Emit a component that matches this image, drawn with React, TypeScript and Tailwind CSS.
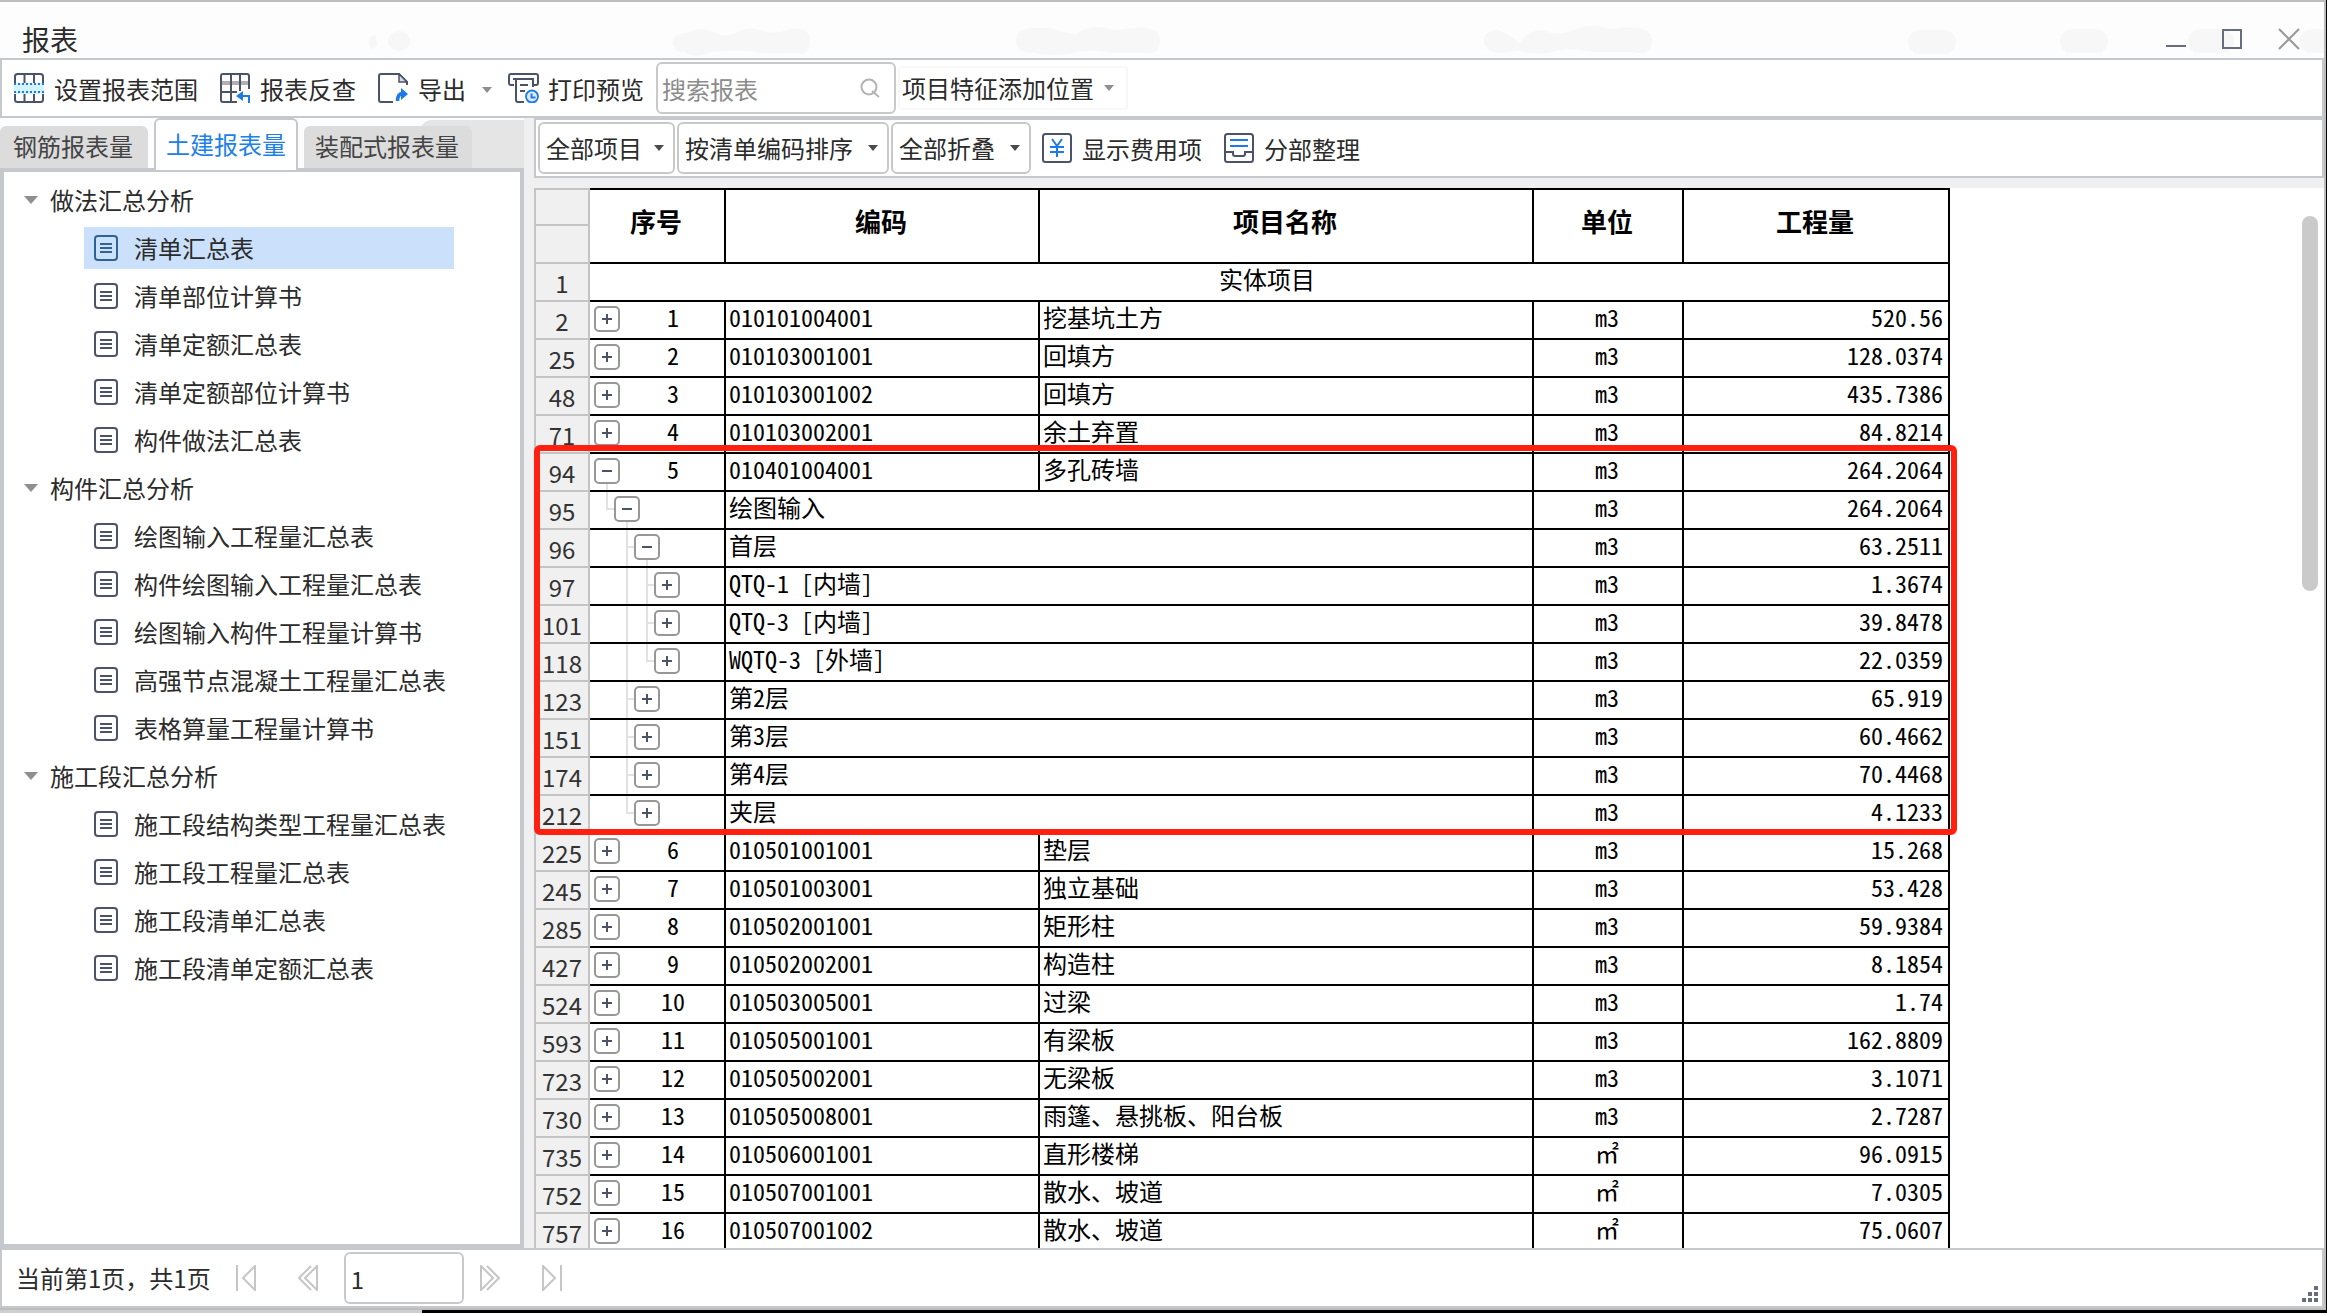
import type { ReactNode } from "react";

const LINE = "#4b5366";
const BLUE = "#1f7ae8";

/* ---------- icons ---------- */

function RangeIcon() {
  return (
    <svg width="30" height="30" viewBox="0 0 30 30" fill="none" aria-hidden="true">
      <rect x="1" y="1" width="28" height="28" rx="2.5" stroke={LINE} strokeWidth="2" />
      <path d="M10.5 1v9M20 1v9M10.5 21v8M20 21v8" stroke={LINE} strokeWidth="2" />
      <rect x="0" y="10" width="30" height="11" fill="#d3f4ff" />
      <path d="M0 11h30M0 19h30" stroke={BLUE} strokeWidth="2" strokeDasharray="2 2" />
    </svg>
  );
}

function LookupIcon() {
  return (
    <svg width="30" height="30" viewBox="0 0 30 30" fill="none" aria-hidden="true">
      <rect x="2" y="8" width="26" height="4" fill="#b0b0b0" />
      <path d="M17 29H3a2 2 0 0 1-2-2V3a2 2 0 0 1 2-2h24a2 2 0 0 1 2 2v13" stroke={LINE} strokeWidth="2" />
      <path d="M11 1v28M20 1v17M1 19h16" stroke={LINE} strokeWidth="2" />
      <path d="M20 23h9v7" stroke={BLUE} strokeWidth="2" />
      <path d="M16 23l7-5v10z" fill={BLUE} />
    </svg>
  );
}

function ExportIcon() {
  return (
    <svg width="30" height="30" viewBox="0 0 30 30" fill="none" aria-hidden="true">
      <path d="M15 29H3a2 2 0 0 1-2-2V3a2 2 0 0 1 2-2h18l8 8v3" stroke={LINE} strokeWidth="2" />
      <path d="M21 1v8h8z" stroke={LINE} strokeWidth="1.5" fill="#d5d8de" />
      <path d="M19.5 28c0-5 2-7.500 5.500-7.500" stroke={BLUE} strokeWidth="3.5" />
      <path d="M23 15l7 6-7 6z" fill={BLUE} />
    </svg>
  );
}

function PreviewIcon() {
  return (
    <svg className="-mr-0.5" width="32" height="30" viewBox="0 0 32 30" fill="none" aria-hidden="true">
      <path d="M6 12H3a2 2 0 0 1-2-2V3a2 2 0 0 1 2-2h25a2 2 0 0 1 2 2v7a2 2 0 0 1-2 2h-3" stroke={LINE} strokeWidth="2" />
      <path d="M5 6h21M8 6v21a2 2 0 0 0 2 2h6M25 6v8M12 12h8M12 18h5" stroke={LINE} strokeWidth="2" />
      <circle cx="24" cy="23.5" r="6" fill="#dcebff" stroke={BLUE} strokeWidth="1.8" />
      <path d="M23.5 20.5v4h4" stroke={BLUE} strokeWidth="2" />
    </svg>
  );
}

function FeeIcon() {
  return (
    <svg width="30" height="30" viewBox="0 0 30 30" fill="none" aria-hidden="true">
      <rect x="1" y="1" width="28" height="28" rx="2.5" stroke={LINE} strokeWidth="2" />
      <path d="M10 6l5 7 5-7M15 13v11M8 14h14M8 19h14" stroke={BLUE} strokeWidth="2" />
    </svg>
  );
}

function SectionIcon() {
  return (
    <svg width="30" height="30" viewBox="0 0 30 30" fill="none" aria-hidden="true">
      <rect x="1" y="1" width="28" height="28" rx="2.5" stroke={LINE} strokeWidth="2" />
      <path d="M6 7h18M6 13h18" stroke={BLUE} strokeWidth="2" />
      <path d="M1 19h8v2q0 2 2 2h8q2 0 2-2v-2h8" stroke={LINE} strokeWidth="2" />
    </svg>
  );
}

function DocIcon({ active }: { active?: boolean }) {
  const color = active ? "#2f6490" : LINE;
  return (
    <svg width="24" height="26" viewBox="0 0 24 26" fill="none" aria-hidden="true">
      <rect x="1" y="1" width="22" height="24" rx="3" stroke={color} strokeWidth="2" />
      <path d="M6 9h12M6 13h12M6 17h12" stroke={color} strokeWidth="2" />
    </svg>
  );
}

function Caret({ color = "#8f8f8f", wide }: { color?: string; wide?: boolean }) {
  return wide ? (
    <svg width="14" height="8" viewBox="0 0 14 8" aria-hidden="true">
      <path d="M0 0h14L7 8z" fill={color} />
    </svg>
  ) : (
    <svg width="10" height="6" viewBox="0 0 10 6" aria-hidden="true">
      <path d="M0 0h10L5 6z" fill={color} />
    </svg>
  );
}

/* ---------- data ---------- */

const tree = [
  {
    title: "做法汇总分析",
    items: ["清单汇总表", "清单部位计算书", "清单定额汇总表", "清单定额部位计算书", "构件做法汇总表"],
  },
  {
    title: "构件汇总分析",
    items: [
      "绘图输入工程量汇总表",
      "构件绘图输入工程量汇总表",
      "绘图输入构件工程量计算书",
      "高强节点混凝土工程量汇总表",
      "表格算量工程量计算书",
    ],
  },
  {
    title: "施工段汇总分析",
    items: ["施工段结构类型工程量汇总表", "施工段工程量汇总表", "施工段清单汇总表", "施工段清单定额汇总表"],
  },
];

type Row = {
  no: number;
  level: number;
  open?: boolean;
  seq?: number;
  code: string;
  name?: string;
  unit?: string;
  qty: string;
  /* x positions of guide lines running the full height of the row */
  through?: number[];
  /* guide line that branches to this row's button; "end" stops at the branch */
  branch?: "mid" | "end";
};

const rows: Row[] = [
  { no: 2, level: 0, seq: 1, code: "010101004001", name: "挖基坑土方", qty: "520.56" },
  { no: 25, level: 0, seq: 2, code: "010103001001", name: "回填方", qty: "128.0374" },
  { no: 48, level: 0, seq: 3, code: "010103001002", name: "回填方", qty: "435.7386" },
  { no: 71, level: 0, seq: 4, code: "010103002001", name: "余土弃置", qty: "84.8214" },
  { no: 94, level: 0, open: true, seq: 5, code: "010401004001", name: "多孔砖墙", qty: "264.2064" },
  { no: 95, level: 1, open: true, code: "绘图输入", qty: "264.2064", branch: "end" },
  { no: 96, level: 2, open: true, code: "首层", qty: "63.2511", branch: "mid" },
  { no: 97, level: 3, code: "QTQ-1 [内墙]", qty: "1.3674", branch: "mid", through: [36] },
  { no: 101, level: 3, code: "QTQ-3 [内墙]", qty: "39.8478", branch: "mid", through: [36] },
  { no: 118, level: 3, code: "WQTQ-3 [外墙]", qty: "22.0359", branch: "end", through: [36] },
  { no: 123, level: 2, code: "第2层", qty: "65.919", branch: "mid" },
  { no: 151, level: 2, code: "第3层", qty: "60.4662", branch: "mid" },
  { no: 174, level: 2, code: "第4层", qty: "70.4468", branch: "mid" },
  { no: 212, level: 2, code: "夹层", qty: "4.1233", branch: "end" },
  { no: 225, level: 0, seq: 6, code: "010501001001", name: "垫层", qty: "15.268" },
  { no: 245, level: 0, seq: 7, code: "010501003001", name: "独立基础", qty: "53.428" },
  { no: 285, level: 0, seq: 8, code: "010502001001", name: "矩形柱", qty: "59.9384" },
  { no: 427, level: 0, seq: 9, code: "010502002001", name: "构造柱", qty: "8.1854" },
  { no: 524, level: 0, seq: 10, code: "010503005001", name: "过梁", qty: "1.74" },
  { no: 593, level: 0, seq: 11, code: "010505001001", name: "有梁板", qty: "162.8809" },
  { no: 723, level: 0, seq: 12, code: "010505002001", name: "无梁板", qty: "3.1071" },
  { no: 730, level: 0, seq: 13, code: "010505008001", name: "雨篷、悬挑板、阳台板", qty: "2.7287" },
  { no: 735, level: 0, seq: 14, code: "010506001001", name: "直形楼梯", unit: "㎡", qty: "96.0915" },
  { no: 752, level: 0, seq: 15, code: "010507001001", name: "散水、坡道", unit: "㎡", qty: "7.0305" },
  { no: 757, level: 0, seq: 16, code: "010507001002", name: "散水、坡道", unit: "㎡", qty: "75.0607" },
];

/* ---------- pieces ---------- */

function ToolButton({ icon, children }: { icon: ReactNode; children: ReactNode }) {
  return (
    <button type="button" className="flex items-center gap-[10px] leading-8">
      {icon}
      <span className="pt-0.5">{children}</span>
    </button>
  );
}

function DropDown({ label, value, width }: { label: string; value: string; width: string }) {
  return (
    <div className={`relative flex items-center ${width}`}>
      <select
        aria-label={label}
        defaultValue={value}
        className="h-[52px] w-full appearance-none rounded-md border-2 border-[#c9c9c9] bg-white pl-1.5 leading-8 outline-none"
      >
        <option>{value}</option>
      </select>
      <span className="pointer-events-none absolute right-[11px]">
        <Caret color="#4a4a4a" />
      </span>
    </div>
  );
}

function Guides({ row }: { row: Row }) {
  const indent = row.level * 20;
  return (
    <svg className="absolute inset-0" width="134" height="36" fill="none" stroke="#e2e2e2" strokeWidth="2" aria-hidden="true">
      {row.through?.map((x) => <path key={x} d={`M${x + 1} 0v36`} />)}
      {row.branch && <path d={`M${indent - 3} 0v${row.branch === "end" ? 18 : 36}`} />}
      {row.branch && <path d={`M${indent - 3} 17h8`} />}
      {row.open && <path d={`M${indent + 17} 30v6`} />}
    </svg>
  );
}

const indents = ["ml-1", "ml-6", "ml-11", "ml-16"];

function Expander({ row }: { row: Row }) {
  return (
    <button
      type="button"
      aria-label={row.open ? "折叠" : "展开"}
      aria-expanded={!!row.open}
      className={`relative mb-0.5 grid h-[26px] w-[26px] shrink-0 place-items-center rounded-[5px] border-2 border-[#979797] bg-white ${indents[row.level]}`}
    >
      <svg width="10" height="10" viewBox="0 0 10 10" stroke={LINE} strokeWidth="2" aria-hidden="true">
        <path d="M0 5h10" />
        {!row.open && <path d="M5 0v10" />}
      </svg>
    </button>
  );
}

const rowNo = "border-b-2 border-x-2 border-[#c4c4c4] bg-[#f0f0f0] p-0 pt-px text-center font-normal leading-8 text-[#333]";
const cell = "border-b-2 border-r-2 border-black p-0 leading-7";
const headCell = "border-y-2 border-r-2 border-black p-0 pb-2.5 pr-0.5 text-center text-[26px] font-bold leading-8";

function ReportTable() {
  return (
    <table className="w-[1416px] table-fixed border-separate border-spacing-0 text-black">
      <colgroup>
        <col className="w-[56px]" />
        <col className="w-[136px]" />
        <col className="w-[314px]" />
        <col className="w-[494px]" />
        <col className="w-[150px]" />
        <col className="w-[266px]" />
      </colgroup>
      <thead>
        <tr className="h-[38px]">
          <td className={`${rowNo} border-t-2`} />
          {["序号", "编码", "项目名称", "单位", "工程量"].map((t) => (
            <th key={t} rowSpan={2} scope="col" className={headCell}>
              {t}
            </th>
          ))}
        </tr>
        <tr className="h-[38px]">
          <td className={rowNo} />
        </tr>
      </thead>
      <tbody className="[font-feature-settings:'hwid']">
        <tr className="h-[38px]">
          <th scope="row" className={`${rowNo} [font-feature-settings:normal]`}>1</th>
          <td colSpan={5} className={`${cell} pb-[7px] pr-1 text-center`}>
            实体项目
          </td>
        </tr>
        {rows.map((r) => (
          <tr key={r.no} className="h-[38px]">
            <th scope="row" className={`${rowNo} [font-feature-settings:normal]`}>{r.no}</th>
            <td className={`${cell} relative`}>
              <Guides row={r} />
              <div className="flex h-9 items-center">
                <Expander row={r} />
                {r.seq && <span className="mb-[7px] flex-1 pl-0.5 text-center">{r.seq}</span>}
              </div>
            </td>
            <td colSpan={r.name ? 1 : 2} className={`${cell} pb-[7px] pl-[3px]`}>
              {r.code}
            </td>
            {r.name && <td className={`${cell} pb-[7px] pl-[3px]`}>{r.name}</td>}
            <td className={`${cell} pb-[7px] pr-0.5 text-center`}>{r.unit ?? "m3"}</td>
            <td className={`${cell} pb-[7px] pr-[5px] text-right`}>{r.qty}</td>
          </tr>
        ))}
      </tbody>
    </table>
  );
}

function Sidebar() {
  return (
    <aside className="flex w-[524px] shrink-0 flex-col">
      <div role="tablist" className="flex h-[50px] shrink-0 items-end bg-[#fdfdfd] leading-8 text-[#444]">
        <button type="button" role="tab" className="h-[42px] w-[148px] rounded-t-md bg-[#dcdcdc] pb-0.5 pr-0.5">
          钢筋报表量
        </button>
        <button
          type="button"
          role="tab"
          aria-selected="true"
          className="relative z-10 -mb-0.5 ml-[6px] h-[52px] w-[144px] rounded-t-md border-2 border-b-0 border-[#c5c8cd] bg-white pb-0.5 text-[#2080e8]"
        >
          土建报表量
        </button>
        <button type="button" role="tab" className="relative z-10 ml-[6px] h-[42px] w-[168px] rounded-t-md bg-[#dcdcdc] pb-0.5 pr-0.5">
          装配式报表量
        </button>
        <div className="-ml-[52px] h-12 flex-1 rounded-tl-xl bg-[#e5e5e5]" />
      </div>
      <nav className="min-h-0 flex-1 overflow-hidden border-4 border-[#c5c8cd] bg-white pt-1 leading-8">
        {tree.map((g, gi) => (
          <section key={g.title}>
            <button type="button" className="flex h-12 items-center pl-5">
              <Caret wide />
              <span className="ml-3">{g.title}</span>
            </button>
            <ul>
              {g.items.map((t, i) => {
                const active = gi === 0 && i === 0;
                return (
                  <li key={t} className="py-[3px] pl-20 pr-[66px]">
                    <a
                      href="#report"
                      className={`flex h-[42px] items-center whitespace-nowrap pl-[10px] ${active ? "bg-[#cbe1fb]" : ""}`}
                    >
                      <DocIcon active={active} />
                      <span className="ml-4">{t}</span>
                    </a>
                  </li>
                );
              })}
            </ul>
          </section>
        ))}
      </nav>
    </aside>
  );
}

function TitleSmudges() {
  return (
    <svg className="absolute inset-0 h-full w-full" fill="#f7f7f7" aria-hidden="true">
      <ellipse cx="373" cy="40" rx="4" ry="7" />
      <ellipse cx="399" cy="39" rx="11" ry="10" />
      <path d="M673 40q0-8 14-9 14-8 30 1 14 3 22-3 12-5 27 1 12 2 24-3 20-3 20 12t-14 12q-30 2-45-2-24-2-42 2-14 6-24-1-12 0-12-10z" />
      <path d="M1016 38q0-12 16-12h20q14 6 24 6 12-8 26-7 12 4 24 2 34-5 34 11t-16 13h-32q-20-5-40 0-20 4-38 0-18 0-18-13z" />
      <path d="M1484 40q0-12 14-12 16 6 22 14 8-16 26-13 14 6 30-2 16-6 34 0 42-6 42 11t-20 12h-40q-24-6-44 1-18 2-30-3-32 8-34-8z" />
      <rect x="1908" y="28" width="48" height="24" rx="12" />
      <rect x="2060" y="27" width="48" height="24" rx="12" />
      <rect x="2188" y="27" width="46" height="24" rx="12" />
      <rect x="2300" y="27" width="40" height="24" rx="12" />
    </svg>
  );
}

function TitleBar() {
  return (
    <header className="relative flex h-14 shrink-0 items-center justify-between bg-[#fdfdfd] pl-[22px] pr-6 pt-[18px]">
      <TitleSmudges />
      <h1 className="relative text-[28px] leading-8">报表</h1>
      <div className="relative flex items-center gap-9">
        <button type="button" aria-label="最小化">
          <svg width="20" height="22" viewBox="0 0 20 22" stroke="#666d7c" strokeWidth="2">
            <path d="M0 18h20" />
          </svg>
        </button>
        <button type="button" aria-label="最大化">
          <svg width="20" height="20" viewBox="0 0 20 20" fill="none" stroke="#666d7c" strokeWidth="2">
            <rect x="1" y="1" width="18" height="18" />
          </svg>
        </button>
        <button type="button" aria-label="关闭">
          <svg width="22" height="22" viewBox="0 0 22 22" stroke="#999" strokeWidth="2">
            <path d="M1 1l20 20M21 1L1 21" />
          </svg>
        </button>
      </div>
    </header>
  );
}

function MainToolbar() {
  return (
    <div className="relative flex h-[60px] shrink-0 items-center border-2 border-[#c5c8cd] bg-white pl-3">
      <ToolButton icon={<RangeIcon />}>设置报表范围</ToolButton>
      <div className="ml-[22px]">
        <ToolButton icon={<LookupIcon />}>报表反查</ToolButton>
      </div>
      <div className="ml-[22px]">
        <ToolButton icon={<ExportIcon />}>导出</ToolButton>
      </div>
      <button type="button" aria-label="导出选项" className="mx-4 pt-1">
        <Caret />
      </button>
      <ToolButton icon={<PreviewIcon />}>打印预览</ToolButton>
      <label className="relative ml-3 flex items-center">
        <input
          type="text"
          aria-label="搜索报表"
          placeholder="搜索报表"
          className="h-[52px] w-[240px] rounded-md border-2 border-[#c9c9c9] bg-white pl-1 leading-8 outline-none placeholder:text-[#8c8c8c]"
        />
        <svg className="absolute right-4" width="20" height="20" viewBox="0 0 20 20" fill="none" stroke="#b3b3b3" strokeWidth="2" aria-hidden="true">
          <circle cx="9" cy="9" r="7.5" />
          <path d="M12 13l7 6" />
        </svg>
      </label>
      <button type="button" className="ml-0.5 flex h-[44px] items-center gap-[10px] rounded border-2 border-[#f8f8f8] pl-0.5 pr-3 leading-8">
        项目特征添加位置
        <Caret />
      </button>
    </div>
  );
}

const pagerStroke = "#c6c6c6";

function Footer() {
  return (
    <footer className="flex h-[60px] shrink-0 items-center border-2 border-[#c5c8cd] bg-white pl-[14px]">
      <span className="leading-8">当前第1页，共1页</span>
      <button type="button" aria-label="首页" className="ml-[25px]">
        <svg width="20" height="26" viewBox="0 0 20 26" fill="none" stroke={pagerStroke} strokeWidth="2">
          <path d="M1 0v26M19 1L7 13l12 12z" />
        </svg>
      </button>
      <button type="button" aria-label="上一页" className="ml-[42px]">
        <svg width="20" height="26" viewBox="0 0 20 26" fill="none" stroke={pagerStroke} strokeWidth="2">
          <path d="M13 1L1 13l12 12M19 1L7 13l12 12z" />
        </svg>
      </button>
      <input
        type="text"
        aria-label="页码"
        defaultValue="1"
        className="ml-[26px] h-[52px] w-[120px] rounded-md border-2 border-[#c9c9c9] bg-white pl-[5px] leading-8 outline-none"
      />
      <button type="button" aria-label="下一页" className="ml-4">
        <svg width="20" height="26" viewBox="0 0 20 26" fill="none" stroke={pagerStroke} strokeWidth="2">
          <path d="M7 1l12 12L7 25M1 1l12 12L1 25z" />
        </svg>
      </button>
      <button type="button" aria-label="末页" className="ml-[42px]">
        <svg width="20" height="26" viewBox="0 0 20 26" fill="none" stroke={pagerStroke} strokeWidth="2">
          <path d="M19 0v26M1 1l12 12L1 25z" />
        </svg>
      </button>
      <svg className="mb-1 ml-auto mr-1 self-end" width="16" height="16" viewBox="0 0 16 16" fill="#666d7c" aria-hidden="true">
        <path d="M12 0h4v4h-4zM6 6h4v4H6zM12 6h4v4h-4zM0 12h4v4H0zM6 12h4v4H6zM12 12h4v4h-4z" />
      </svg>
    </footer>
  );
}

export default function App() {
  return (
    <div className="flex h-screen flex-col overflow-hidden bg-black pr-px font-['Noto_Sans_CJK_SC',sans-serif] text-[24px] text-[#2b2b2b]">
      <div className="flex min-h-0 flex-1 flex-col border-y-2 border-r-2 border-[#bdbdbd] bg-[#f0f0f0]">
        <TitleBar />
        <MainToolbar />
        <div className="flex min-h-0 flex-1">
          <Sidebar />
          <main className="ml-[10px] flex min-w-0 flex-1 flex-col">
            <div className="flex h-[60px] shrink-0 items-center gap-0.5 border-2 border-[#c5c8cd] bg-white pl-0.5">
              <DropDown label="项目范围" value="全部项目" width="w-[137px]" />
              <DropDown label="排序方式" value="按清单编码排序" width="w-[212px]" />
              <DropDown label="折叠方式" value="全部折叠" width="w-[140px]" />
              <div className="ml-[9px] flex gap-[22px]">
                <ToolButton icon={<FeeIcon />}>显示费用项</ToolButton>
                <ToolButton icon={<SectionIcon />}>分部整理</ToolButton>
              </div>
            </div>
            <div className="relative mt-[10px] min-h-0 flex-1 overflow-hidden bg-white">
              <ReportTable />
              <div className="pointer-events-none absolute left-0 top-[257px] h-[390px] w-[1423px] rounded-md border-6 border-[#ff2012]" />
              <div className="absolute right-[6px] top-7 h-[375px] w-4 rounded-full bg-[#cacaca]" />
            </div>
          </main>
        </div>
        <Footer />
      </div>
      <div className="flex h-[3px] shrink-0">
        <div className="w-[422px] bg-[#cfcfcf]" />
      </div>
    </div>
  );
}
